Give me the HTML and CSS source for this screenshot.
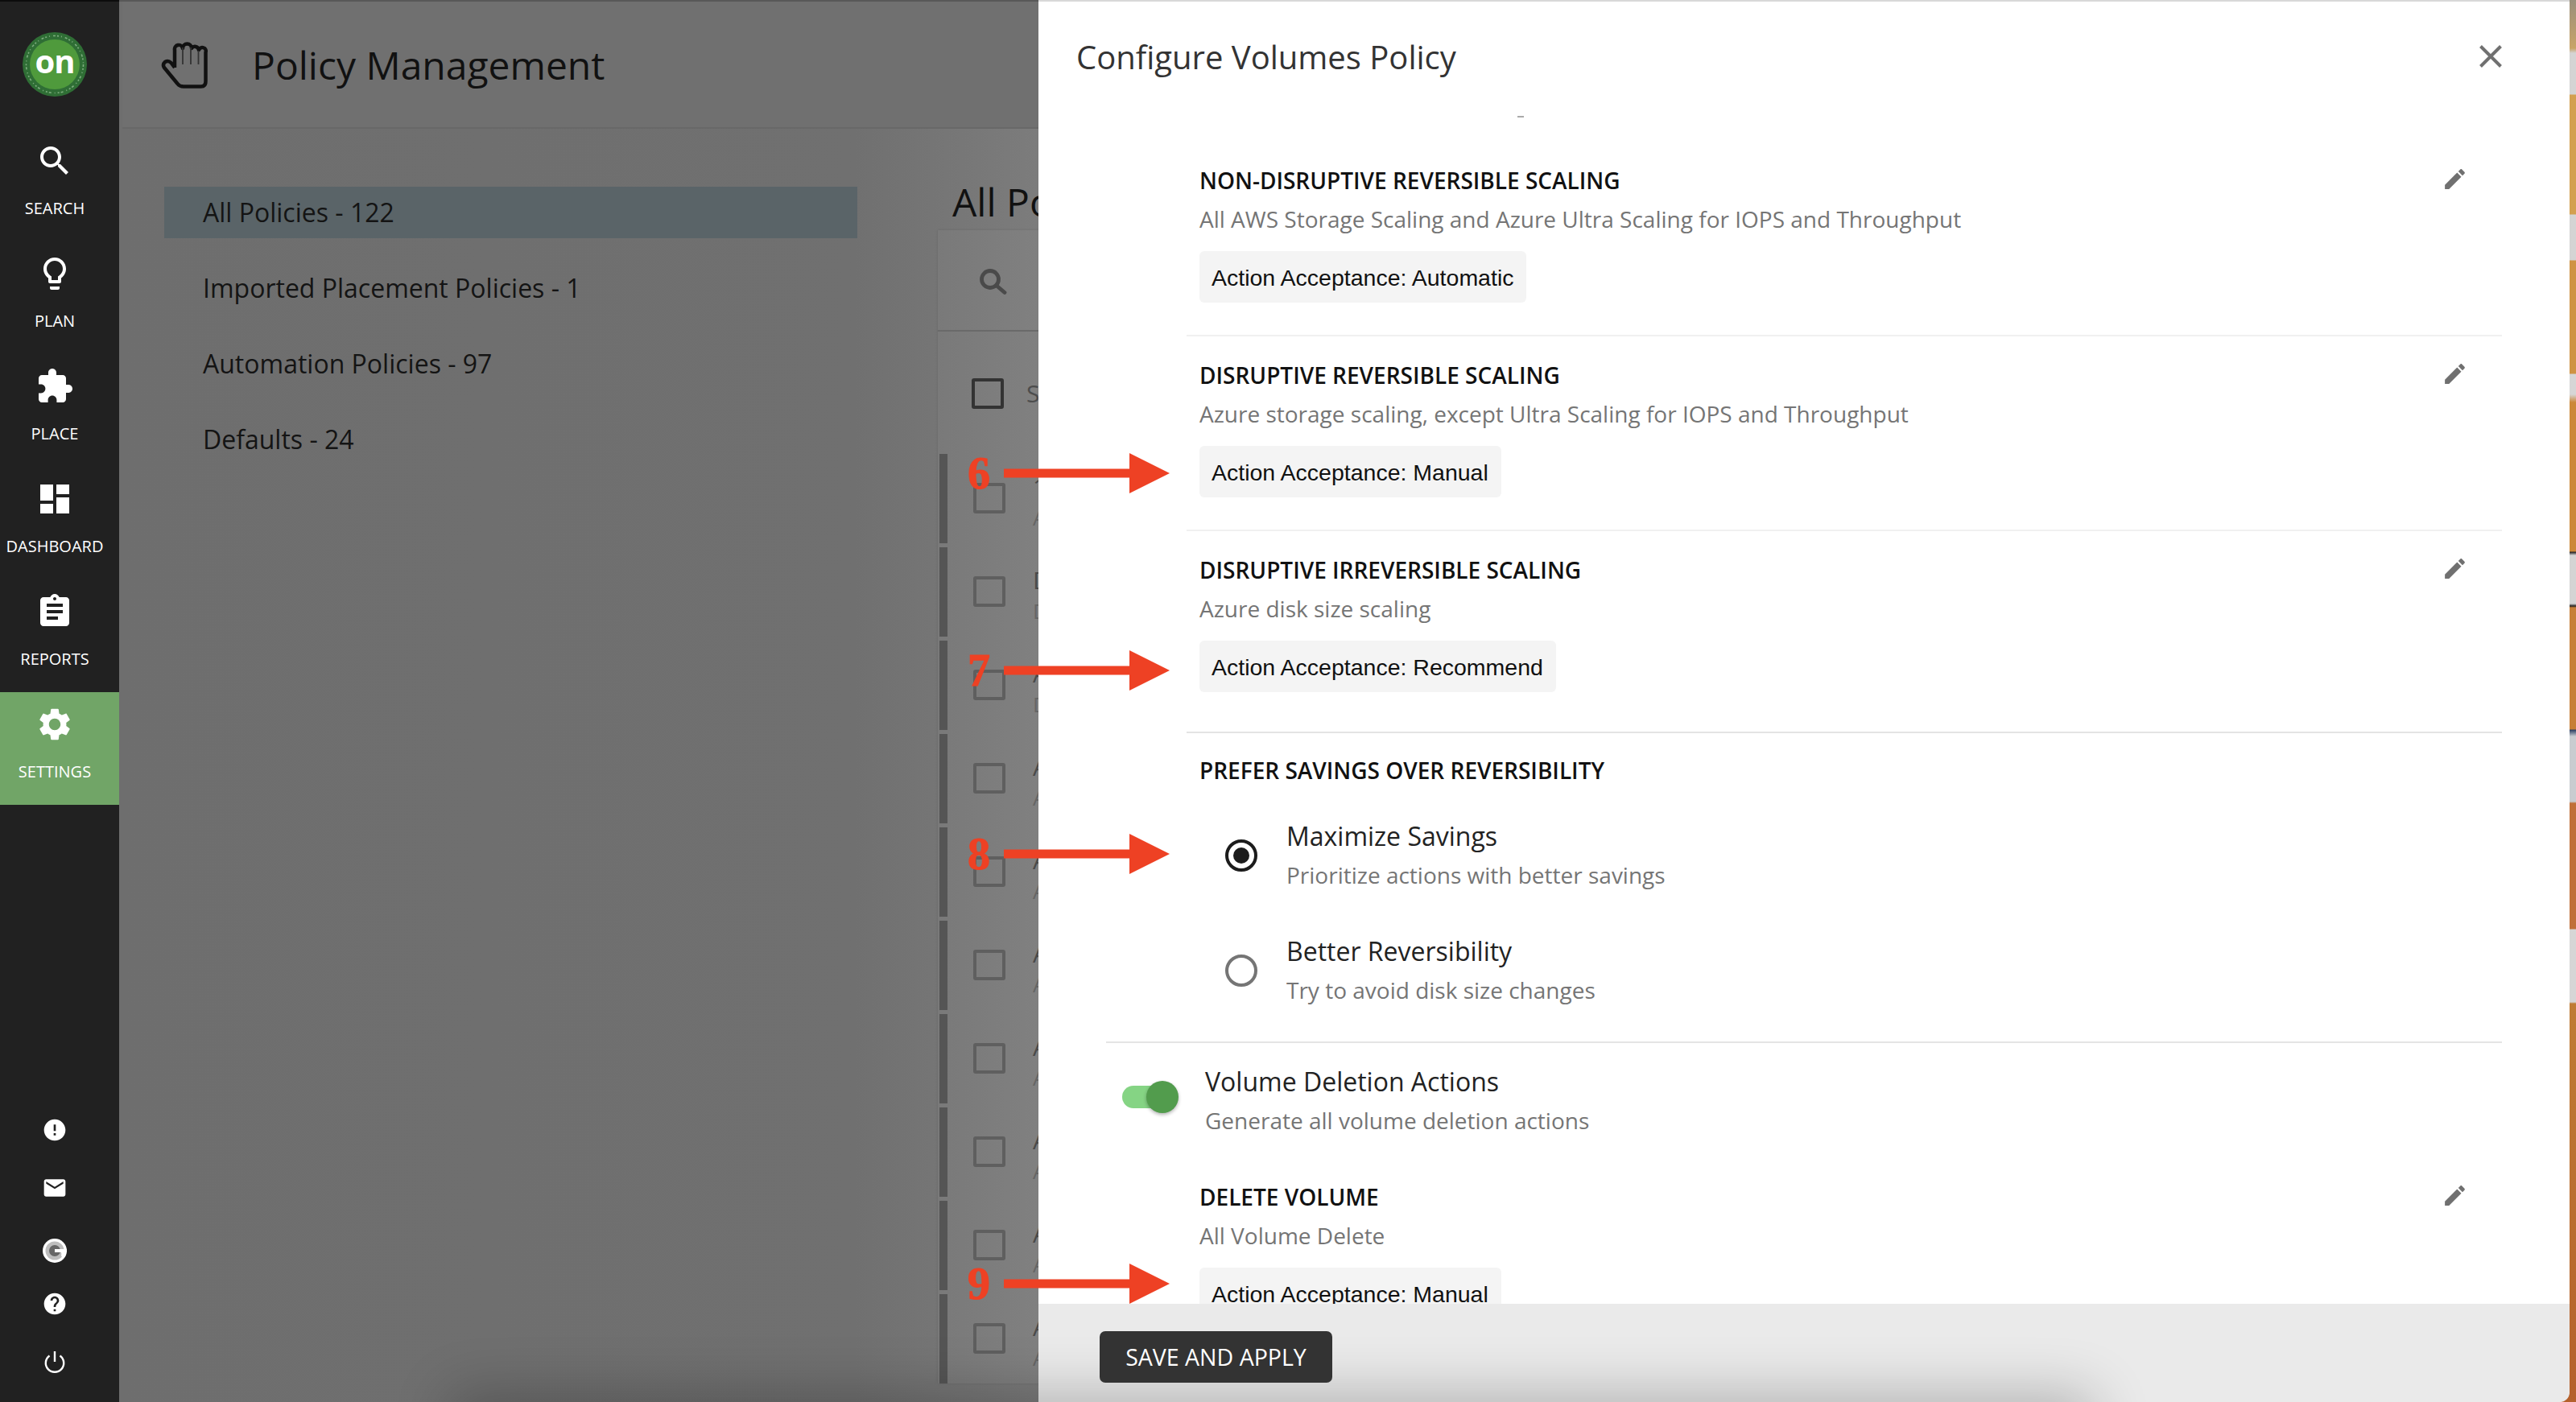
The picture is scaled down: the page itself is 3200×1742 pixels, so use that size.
FILE: index.html
```html
<!DOCTYPE html>
<html lang="en">
<head>
<meta charset="utf-8">
<title>Policy Management</title>
<link rel="stylesheet" href="styles.css">
</head>
<body>
<div class="app">
  <nav class="sidebar">
    <div class="logo">
      <svg class="logo-mark" viewBox="0 0 80 80">
        <circle cx="40" cy="40" r="40" fill="#2f6e35"/>
        <circle cx="40" cy="40" r="35.5" fill="none" stroke="#7fae80" stroke-width="1.6" stroke-dasharray="3 2 2 3 1 4"/>
        <circle cx="40" cy="40" r="31" fill="#4f9a3c"/>
        <text x="40" y="51" text-anchor="middle" class="logo-text">on</text>
      </svg>
    </div>
    <a class="nav-item"><svg class="nav-icon" viewBox="0 0 24 24"><path d="M15.5 14h-.79l-.28-.27C15.41 12.59 16 11.11 16 9.5 16 5.91 13.09 3 9.5 3S3 5.91 3 9.5 5.91 16 9.5 16c1.61 0 3.09-.59 4.23-1.57l.27.28v.79l5 4.99L20.49 19l-4.99-5zm-6 0C7.01 14 5 11.99 5 9.5S7.01 5 9.5 5 14 7.01 14 9.5 11.99 14 9.5 14z"/></svg><span>SEARCH</span></a>
    <a class="nav-item"><svg class="nav-icon" viewBox="0 0 24 24"><path d="M9 21c0 .55.45 1 1 1h4c.55 0 1-.45 1-1v-1H9v1zm3-19C8.14 2 5 5.14 5 9c0 2.38 1.19 4.47 3 5.74V17c0 .55.45 1 1 1h6c.55 0 1-.45 1-1v-2.26c1.81-1.27 3-3.36 3-5.74 0-3.86-3.14-7-7-7zm2.85 11.1l-.85.6V16h-4v-2.3l-.85-.6C7.8 12.16 7 10.63 7 9c0-2.76 2.24-5 5-5s5 2.24 5 5c0 1.63-.8 3.16-2.15 4.1z"/></svg><span>PLAN</span></a>
    <a class="nav-item"><svg class="nav-icon" viewBox="0 0 24 24"><path d="M20.5 11H19V7c0-1.1-.9-2-2-2h-4V3.5C13 2.12 11.88 1 10.5 1S8 2.12 8 3.5V5H4c-1.1 0-1.99.9-1.99 2v3.8H3.5c1.49 0 2.7 1.21 2.7 2.7s-1.21 2.7-2.7 2.7H2V20c0 1.1.9 2 2 2h3.8v-1.5c0-1.49 1.21-2.7 2.7-2.7 1.49 0 2.7 1.21 2.7 2.7V22H17c1.1 0 2-.9 2-2v-4h1.5c1.38 0 2.5-1.12 2.5-2.5S21.88 11 20.5 11z"/></svg><span>PLACE</span></a>
    <a class="nav-item"><svg class="nav-icon" viewBox="0 0 24 24"><path d="M3 13h8V3H3v10zm0 8h8v-6H3v6zm10 0h8V11h-8v10zm0-18v6h8V3h-8z"/></svg><span>DASHBOARD</span></a>
    <a class="nav-item"><svg class="nav-icon" viewBox="0 0 24 24"><path d="M19 3h-4.18C14.4 1.84 13.3 1 12 1c-1.3 0-2.4.84-2.82 2H5c-1.1 0-2 .9-2 2v14c0 1.1.9 2 2 2h14c1.1 0 2-.9 2-2V5c0-1.1-.9-2-2-2zm-7 0c.55 0 1 .45 1 1s-.45 1-1 1-1-.45-1-1 .45-1 1-1zm2 14H7v-2h7v2zm3-4H7v-2h10v2zm0-4H7V7h10v2z"/></svg><span>REPORTS</span></a>
    <a class="nav-item nav-active"><svg class="nav-icon" viewBox="0 0 24 24"><path d="M19.14 12.94c.04-.3.06-.61.06-.94 0-.32-.02-.64-.07-.94l2.03-1.58c.18-.14.23-.41.12-.61l-1.92-3.32c-.12-.22-.37-.29-.59-.22l-2.39.96c-.5-.38-1.03-.7-1.62-.94l-.36-2.54c-.04-.24-.24-.41-.48-.41h-3.84c-.24 0-.43.17-.47.41l-.36 2.54c-.59.24-1.13.57-1.62.94l-2.39-.96c-.22-.08-.47 0-.59.22L2.74 8.87c-.12.21-.08.47.12.61l2.03 1.58c-.05.3-.09.63-.09.94s.02.64.07.94l-2.03 1.58c-.18.14-.23.41-.12.61l1.92 3.32c.12.22.37.29.59.22l2.39-.96c.5.38 1.03.7 1.62.94l.36 2.54c.05.24.24.41.48.41h3.84c.24 0 .44-.17.47-.41l.36-2.54c.59-.24 1.13-.56 1.62-.94l2.39.96c.22.08.47 0 .59-.22l1.92-3.32c.12-.22.07-.47-.12-.61l-2.01-1.58zM12 15.6c-1.98 0-3.6-1.62-3.6-3.6s1.62-3.6 3.6-3.6 3.6 1.62 3.6 3.6-1.62 3.6-3.6 3.6z"/></svg><span>SETTINGS</span></a>
    <div class="nav-tools">
      <div class="tool"><svg class="tool-icon" viewBox="0 0 24 24"><path d="M12 2C6.48 2 2 6.48 2 12s4.48 10 10 10 10-4.48 10-10S17.52 2 12 2zm1 15h-2v-2h2v2zm0-4h-2V7h2v6z"/></svg></div>
      <div class="tool"><svg class="tool-icon" viewBox="0 0 24 24"><path d="M20 4H4c-1.1 0-1.99.9-1.99 2L2 18c0 1.1.9 2 2 2h16c1.1 0 2-.9 2-2V6c0-1.1-.9-2-2-2zm0 4l-8 5-8-5V6l8 5 8-5v2z"/></svg></div>
      <div class="tool tool-g"><svg class="tool-icon" viewBox="0 0 32 32"><circle cx="16" cy="16" r="15" fill="#fff"/><circle cx="16" cy="16" r="11.500" fill="#bdbdbd"/><circle cx="16" cy="16" r="7" fill="#666"/><rect x="16" y="14" width="15" height="4" fill="#fff"/><path d="M27.500 18a11.500 11.500 0 0 1-2 5.500L24 22.500a7 7 0 0 0 0-4.500z" fill="#fff"/></svg></div>
      <div class="tool"><svg class="tool-icon" viewBox="0 0 24 24"><path d="M12 2C6.48 2 2 6.48 2 12s4.48 10 10 10 10-4.48 10-10S17.52 2 12 2zm1 17h-2v-2h2v2zm2.07-7.75l-.9.92C13.45 12.9 13 13.5 13 15h-2v-.5c0-1.1.45-2.1 1.17-2.83l1.24-1.26c.37-.36.59-.86.59-1.41 0-1.1-.9-2-2-2s-2 .9-2 2H8c0-2.21 1.79-4 4-4s4 1.79 4 4c0 .88-.36 1.68-.93 2.25z"/></svg></div>
      <div class="tool"><svg class="tool-icon" viewBox="0 0 32 32"><path class="power" d="M9.5 8.5a11.2 11.2 0 1 0 13 0M16 3v13"/></svg></div>
    </div>
  </nav>

  <main class="main">
    <header class="main-head">
      <svg class="hand" viewBox="0 0 58 64">
        <path class="hand-outline" d="M17 37V15a5 5 0 0 1 10-2a5.5 5.5 0 0 1 11 0a5 5 0 0 1 9 2a4.5 4.5 0 0 1 8.5 3V54q0 6.500-6 6.500H28q-5 0-7.500-3.500L4 37q-2.500-4 1-7q4-2.500 7.500 1L17 37"/>
        <path class="hand-lines" d="M27 12V33M37 12V33M46.500 16V33"/>
      </svg>
      <h1 class="main-title">Policy Management</h1>
    </header>
    <div class="main-body">
      <ul class="cats">
        <li class="cat cat-active">All Policies - 122</li>
        <li class="cat">Imported Placement Policies - 1</li>
        <li class="cat">Automation Policies - 97</li>
        <li class="cat">Defaults - 24</li>
      </ul>
      <section class="policies">
        <h2 class="policies-title">All Policies</h2>
        <div class="card">
          <div class="card-search"><svg class="card-search-icon" viewBox="0 0 24 24"><circle cx="10" cy="10" r="7" /><path d="M15 15l7 6"/></svg></div>
          <div class="card-head"><span class="box box-head"></span><span class="col-name">Select all</span></div>
          <div class="prow"><i class="pbar"></i><span class="box"></span><div class="ptext"><b>1 Policy</b><small>Automation</small></div></div>
          <div class="prow"><i class="pbar"></i><span class="box"></span><div class="ptext"><b>Default</b><small>Default</small></div></div>
          <div class="prow"><i class="pbar"></i><span class="box"></span><div class="ptext"><b>Automation</b><small>Default</small></div></div>
          <div class="prow"><i class="pbar"></i><span class="box"></span><div class="ptext"><b>Automation</b><small>Automation</small></div></div>
          <div class="prow"><i class="pbar"></i><span class="box"></span><div class="ptext"><b>Automation</b><small>Automation</small></div></div>
          <div class="prow"><i class="pbar"></i><span class="box"></span><div class="ptext"><b>Automation</b><small>Automation</small></div></div>
          <div class="prow"><i class="pbar"></i><span class="box"></span><div class="ptext"><b>Automation</b><small>Automation</small></div></div>
          <div class="prow"><i class="pbar"></i><span class="box"></span><div class="ptext"><b>Automation</b><small>Automation</small></div></div>
          <div class="prow"><i class="pbar"></i><span class="box"></span><div class="ptext"><b>Automation</b><small>Automation</small></div></div>
          <div class="prow"><i class="pbar"></i><span class="box"></span><div class="ptext"><b>Automation</b><small>Automation</small></div></div>
        </div>
      </section>
    </div>
  </main>

  <aside class="panel">
    <header class="panel-head">
      <h2 class="panel-title">Configure Volumes Policy</h2>
      <svg class="close" viewBox="0 0 28 28"><path d="M1.500 1.500l25 25M26.500 1.500l-25 25"/></svg>
    </header>
    <div class="panel-scroll">
      <div class="sliver"></div>
      <section class="rule">
        <div class="rule-head"><h3 class="rule-title">NON-DISRUPTIVE REVERSIBLE SCALING</h3><svg class="edit" viewBox="0 0 24 24"><path d="M3 17.250V21h3.750L17.810 9.940l-3.750-3.750L3 17.250zM20.710 7.040c.39-.39.39-1.020 0-1.410l-2.340-2.340c-.39-.39-1.020-.39-1.410 0l-1.830 1.830 3.750 3.750 1.830-1.830z"/></svg></div>
        <p class="rule-desc">All AWS Storage Scaling and Azure Ultra Scaling for IOPS and Throughput</p>
        <div class="chip">Action Acceptance: Automatic</div>
      </section>
      <section class="rule">
        <div class="rule-head"><h3 class="rule-title">DISRUPTIVE REVERSIBLE SCALING</h3><svg class="edit" viewBox="0 0 24 24"><path d="M3 17.250V21h3.750L17.810 9.940l-3.750-3.750L3 17.250zM20.710 7.040c.39-.39.39-1.020 0-1.410l-2.340-2.340c-.39-.39-1.020-.39-1.410 0l-1.830 1.830 3.750 3.750 1.830-1.830z"/></svg></div>
        <p class="rule-desc">Azure storage scaling, except Ultra Scaling for IOPS and Throughput</p>
        <div class="chip">Action Acceptance: Manual</div>
      </section>
      <section class="rule rule-last">
        <div class="rule-head"><h3 class="rule-title">DISRUPTIVE IRREVERSIBLE SCALING</h3><svg class="edit" viewBox="0 0 24 24"><path d="M3 17.250V21h3.750L17.810 9.940l-3.750-3.750L3 17.250zM20.710 7.040c.39-.39.39-1.020 0-1.410l-2.340-2.340c-.39-.39-1.020-.39-1.410 0l-1.830 1.830 3.750 3.750 1.830-1.830z"/></svg></div>
        <p class="rule-desc">Azure disk size scaling</p>
        <div class="chip">Action Acceptance: Recommend</div>
      </section>
      <section class="prefer">
        <h3 class="rule-title">PREFER SAVINGS OVER REVERSIBILITY</h3>
        <div class="option option-first">
          <span class="radio radio-on"></span>
          <div><div class="opt-label">Maximize Savings</div><div class="rule-desc">Prioritize actions with better savings</div></div>
        </div>
        <div class="option">
          <span class="radio"></span>
          <div><div class="opt-label">Better Reversibility</div><div class="rule-desc">Try to avoid disk size changes</div></div>
        </div>
      </section>
      <section class="deletion">
        <div class="toggle"><span class="toggle-track"></span><span class="toggle-thumb"></span></div>
        <div><div class="opt-label">Volume Deletion Actions</div><div class="rule-desc">Generate all volume deletion actions</div></div>
      </section>
      <section class="rule rule-delete">
        <div class="rule-head"><h3 class="rule-title">DELETE VOLUME</h3><svg class="edit" viewBox="0 0 24 24"><path d="M3 17.250V21h3.750L17.810 9.940l-3.750-3.750L3 17.250zM20.710 7.040c.39-.39.39-1.020 0-1.410l-2.340-2.340c-.39-.39-1.020-.39-1.410 0l-1.830 1.830 3.750 3.750 1.830-1.830z"/></svg></div>
        <p class="rule-desc">All Volume Delete</p>
        <div class="chip">Action Acceptance: Manual</div>
      </section>
    </div>
    <footer class="panel-foot">
      <div class="foot-shade"></div>
      <button class="save">SAVE AND APPLY</button>
    </footer>
  </aside>

  <div class="note note-6"><span class="note-num">6</span><svg class="arrow" viewBox="0 0 206 50"><path d="M0 19.500H156V0L206 25L156 50V30.500H0z"/></svg></div>
  <div class="note note-7"><span class="note-num">7</span><svg class="arrow" viewBox="0 0 206 50"><path d="M0 19.500H156V0L206 25L156 50V30.500H0z"/></svg></div>
  <div class="note note-8"><span class="note-num">8</span><svg class="arrow" viewBox="0 0 206 50"><path d="M0 19.500H156V0L206 25L156 50V30.500H0z"/></svg></div>
  <div class="note note-9"><span class="note-num">9</span><svg class="arrow" viewBox="0 0 206 50"><path d="M0 19.500H156V0L206 25L156 50V30.500H0z"/></svg></div>
</div>
</body>
</html>
```

FILE: styles.css
```css
* { box-sizing: border-box; }
html, body { margin: 0; height: 100%; overflow: hidden; }
body {
  font-family: "Open Sans", "Liberation Sans", sans-serif;
  background-color: #c98535;
  background-image: linear-gradient(to bottom,
    #9a8f7c 0, #c8a468 60px,
    #d4d4d4 66px, #d4d4d4 117px,
    #d3a050 118px, #d3a050 266px,
    #d4d4d4 267px, #d4d4d4 323px,
    #cf9343 324px, #cf9343 464px,
    #d6d6d6 465px, #d6d6d6 490px,
    #cc8838 500px, #cc8838 685px,
    #222 686px, #d4d4d4 690px, #d4d4d4 750px, #222 753px,
    #c77f37 755px, #c77f37 906px,
    #2b3f63 907px, #c8ccd0 915px, #c8ccd0 996px,
    #c0703a 998px, #c0703a 1154px,
    #d6d6d6 1155px, #d6d6d6 1245px,
    #bf7c35 1247px, #b5602c 1742px);
  background-repeat: no-repeat;
  background-position: right top;
  background-size: 40px 100%;
}
.app { position: relative; display: flex; width: 3200px; height: 1742px; overflow: hidden; }

/* sidebar */
.sidebar { width: 148px; flex: none; background: #212121; display: flex; flex-direction: column; border-top: 2px solid #0c0c0c; color: #fff; }
.logo { height: 158px; padding: 38px 0 0 28px; }
.logo-mark { display: block; width: 80px; height: 80px; }
.logo-text { font: 700 40px "Open Sans", sans-serif; letter-spacing: -1px; fill: #fff; }
.nav-item { height: 140px; padding: 16px 12px 0 0; display: flex; flex-direction: column; align-items: center; font-size: 20px; line-height: 28px; }
.nav-active { background: #71a567; }
.nav-icon { width: 48px; height: 48px; fill: #fff; display: block; margin-bottom: 21px; }
.nav-tools { margin-top: auto; padding: 0 12px 14px 0; }
.tool { height: 72px; display: flex; align-items: center; justify-content: center; }
.tool-g { margin: 6px 0 -6px; }
.tool-icon { width: 32px; height: 32px; fill: #fff; display: block; }
.power { fill: none; stroke: #fff; stroke-width: 2.400; }

/* main */
.main { width: 1142px; flex: none; display: flex; flex-direction: column; height: 100%; background: linear-gradient(to right, #6e6e6e 0, #707070 80%, #7c7c7c 100%); border-top: 2px solid #585858; overflow: hidden; }
.main-head { height: 158px; margin-left: 4px; padding-left: 48px; display: flex; align-items: center; border-bottom: 2px solid #686868; background: #707070; flex: none; }
.hand { width: 58px; height: 64px; flex: none; margin: -2px 55px 0 0; }
.hand-outline { fill: none; stroke: #111; stroke-width: 4.500; stroke-linejoin: round; }
.hand-lines { fill: none; stroke: #333; stroke-width: 1.800; }
.main-title { margin: 2px 0 0; font-size: 48px; line-height: 64px; font-weight: 400; color: #111; white-space: nowrap; }
.main-body { display: flex; flex: 1; min-height: 0; }
.cats { list-style: none; margin: 72px 0 0 56px; padding: 0; width: 861px; flex: none; }
.cat { height: 64px; line-height: 64px; margin-bottom: 30px; padding-left: 48px; font-size: 32px; color: #141414; }
.cat-active { background: #5a6468; }
.policies { margin-left: 100px; width: 1000px; flex: none; }
.policies-title { margin: 67px 0 11px 18px; font-size: 48px; line-height: 48px; font-weight: 400; color: #111; white-space: nowrap; }
.card { background: rgba(255,255,255,.035); box-shadow: 0 0 3px rgba(0,0,0,.12); }
.card-search { height: 126px; padding: 46px 0 0 50px; border-bottom: 2px solid #6a6a6a; }
.card-search-icon { display: block; width: 36px; height: 36px; fill: none; stroke: #4a4a4a; stroke-width: 3.200; stroke-linecap: round; }
.card-head { height: 152px; padding: 58px 0 0 42px; display: flex; align-items: flex-start; gap: 28px; }
.box { display: block; width: 40px; height: 38px; border: 4px solid #5f5f5f; border-radius: 3px; flex: none; margin-top: 36px; }
.box-head { border-color: #333; margin-top: 0; }
.col-name { font-size: 30px; line-height: 38px; color: #4d4d4d; }
.prow { display: flex; height: 111px; margin: 0 0 5px 2px; gap: 34px; }
.pbar { display: block; width: 10px; flex: none; background: #555; margin-right: -2px; }
.ptext { padding-top: 22px; color: #4a4a4a; display: flex; flex-direction: column; white-space: nowrap; }
.ptext b { font-weight: 400; font-size: 30px; line-height: 38px; }
.ptext small { font-size: 26px; line-height: 38px; color: #656565; }

/* panel */
.panel { position: absolute; left: 1290px; top: 0; width: 1902px; height: 1742px; background: #fff; display: flex; flex-direction: column; border-top: 2px solid #d8d8d8; border-bottom-right-radius: 14px; }
.panel-head { height: 142px; flex: none; padding: 0 84px 0 47px; display: flex; align-items: flex-start; justify-content: space-between; }
.panel-title { margin: 45px 0 0; font-size: 40px; line-height: 48px; font-weight: 400; color: #333; }
.close { width: 28px; height: 28px; margin-top: 54px; fill: none; stroke: #707070; stroke-width: 4; flex: none; }
.panel-scroll { flex: 1; min-height: 0; overflow: hidden; margin: 0 84px; }
.sliver { width: 8px; height: 2px; margin: 0 0 30px 511px; background: #aaa; }
.rule { margin-left: 100px; padding: 24px 42px 40px 16px; border-bottom: 2px solid #f0f0f0; }
.rule-last { padding-bottom: 49px; border-bottom-color: #e4e4e4; }
.rule-delete { border: 0; padding-top: 47px; }
.rule-head { display: flex; align-items: center; justify-content: space-between; height: 48px; }
.rule-title { margin: 0; font-size: 28px; line-height: 48px; font-weight: 600; color: #111; }
.rule-desc { margin: 0; font-size: 28px; line-height: 48px; color: #757575; }
.edit { width: 33px; height: 33px; fill: #707070; flex: none; margin-top: -4px; }
.chip { display: inline-block; margin-top: 16px; height: 64px; line-height: 66px; padding: 0 16px 0 15px; background: #f4f4f4; border-radius: 6px; font-family: "Liberation Sans", Arial, sans-serif; font-size: 28.500px; color: #111; }
.prefer { margin-left: 0; padding: 22px 0 40px 116px; border-bottom: 2px solid #e4e4e4; }
.option { display: flex; align-items: center; gap: 36px; padding-left: 32px; margin-top: 47px; }
.option-first { margin-top: 34px; }
.radio { display: block; position: relative; width: 40px; height: 40px; border: 4px solid #757575; border-radius: 50%; flex: none; }
.radio-on { border-color: #1c1c1c; }
.radio-on::after { content: ""; position: absolute; inset: 6px; border-radius: 50%; background: #1c1c1c; }
.opt-label { font-size: 32px; line-height: 48px; color: #222; }
.deletion { display: flex; align-items: flex-start; gap: 33px; padding: 24px 0 0 20px; }
.toggle { position: relative; width: 70px; height: 40px; margin-top: 23px; flex: none; }
.toggle-track { position: absolute; left: 0; top: 6px; width: 56px; height: 28px; border-radius: 14px; background: #85d484; }
.toggle-thumb { position: absolute; left: 30px; top: 0; width: 40px; height: 40px; border-radius: 50%; background: #529c4d; box-shadow: 0 2px 4px rgba(0,0,0,.3); }
.panel-foot { position: relative; z-index: 3; height: 122px; flex: none; background: #eaeaea; padding: 34px 0 0 76px; border-bottom-right-radius: 12px; }
.foot-shade { position: absolute; left: -720px; width: 2020px; bottom: -70px; height: 70px; box-shadow: 0 0 70px 10px rgba(0,0,0,.24); }
.save { position: relative; display: block; width: 289px; height: 64px; padding: 0; border: 0; border-radius: 7px; background: #333; color: #fff; font: 400 28.500px/64px "Open Sans", sans-serif; }

/* annotations */
.note { position: absolute; left: 1202px; z-index: 2; display: flex; height: 50px; }
.note-6 { top: 563px; }
.note-7 { top: 808px; }
.note-8 { top: 1036px; }
.note-9 { top: 1570px; }
.note-num { width: 45px; font: 700 56px/50px "Liberation Serif", serif; color: #ee4124; -webkit-text-stroke: 1px #ee4124; }
.arrow { width: 206px; height: 50px; fill: #ee4124; display: block; }
```
